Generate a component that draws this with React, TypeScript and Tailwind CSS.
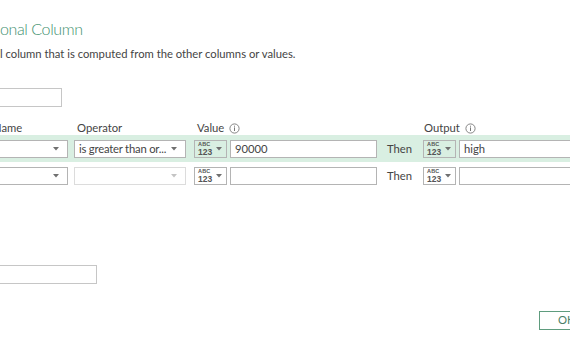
import type { ReactNode } from 'react'

function Caret({ light = false }: { light?: boolean }) {
  return (
    <svg width="6" height="4" viewBox="0 0 6 4" className="shrink-0">
      <path d="M0 0h6L3 3.5z" fill={light ? '#c4c4c4' : '#707070'} />
    </svg>
  )
}

function Info() {
  return (
    <svg width="11" height="11" viewBox="0 0 11 11" className="shrink-0">
      <circle cx="5.5" cy="5.5" r="4.6" fill="none" stroke="#777" strokeWidth="0.9" />
      <rect x="5" y="4.4" width="1" height="3.6" fill="#777" />
      <rect x="5" y="2.7" width="1" height="1" fill="#777" />
    </svg>
  )
}

function TypeBtn() {
  return (
    <div className="flex h-[18px] w-[33px] shrink-0 items-center gap-[4px] border border-[#b4b4b4] pl-[3px]">
      <div className="flex flex-col font-['Liberation_Sans',sans-serif] font-bold leading-none text-[#555]">
        <span className="text-[5.5px] tracking-[0.2px]">ABC</span>
        <span className="mt-[1px] text-[8.5px] leading-[7px]">123</span>
      </div>
      <Caret />
    </div>
  )
}

function Dropdown({ text, w, disabled, className = '' }: { text?: string; w: string; disabled?: boolean; className?: string }) {
  return (
    <div className={`flex h-[18px] shrink-0 items-center justify-between bg-white pl-[4px] pr-[8px] ${w} border ${disabled ? 'border-[#dcdcdc]' : 'border-[#b4b4b4]'} ${className}`}>
      <span className="whitespace-nowrap tracking-[-0.2px]">{text}</span>
      <Caret light={disabled} />
    </div>
  )
}

function TextBox({ value, w }: { value?: string; w: string }) {
  return <div className={`flex h-[18px] shrink-0 items-center border border-[#b4b4b4] bg-white pl-[4px] ${w}`}>{value}</div>
}

function Row({ op, value, out, active, disabledOp }: { op?: string; value?: string; out?: string; active?: boolean; disabledOp?: boolean }) {
  return (
    <div className={`flex h-[27px] items-start pt-[5px] ${active ? 'bg-[#d9efe2]' : ''}`}>
      <Dropdown w="w-[78px]" className="-ml-[10px]" />
      <Dropdown w="w-[112px]" text={op} disabled={disabledOp} className="ml-[6px]" />
      <div className="ml-[8px] shrink-0"><TypeBtn /></div>
      <div className="ml-[3px] shrink-0"><TextBox w="w-[147px]" value={value} /></div>
      <div className="ml-[10px] flex h-[18px] w-[36px] shrink-0 items-center">Then</div>
      <TypeBtn />
      <div className="ml-[3px] shrink-0"><TextBox w="w-[140px]" value={out} /></div>
    </div>
  )
}

function Label({ children, info, className = '' }: { children: ReactNode; info?: boolean; className?: string }) {
  return (
    <div className={`flex shrink-0 items-center gap-[5px] ${className}`}>
      <span>{children}</span>
      {info && <Info />}
    </div>
  )
}

export default function App() {
  return (
    <div className="h-[350px] w-[570px] overflow-hidden bg-white font-['Segoe_UI',Lato,sans-serif] text-[11.25px] text-[#444]">
      <div className="pt-[16px] text-[16px] font-light leading-[26px] tracking-[-0.4px] text-[#3f9170] whitespace-nowrap">onal Column</div>
      <div className="mt-[4px] leading-[16px] whitespace-nowrap">l column that is computed from the other columns or values.</div>

      <div className="mt-[26px] h-[19px] w-[62px] border border-l-0 border-[#c6c6c6]" />

      <div className="mt-[13px] flex h-[16px] items-center whitespace-nowrap">
        <Label className="-ml-[7px] w-[84px]">Name</Label>
        <Label className="w-[120px]">Operator</Label>
        <Label info className="w-[227px]">Value</Label>
        <Label info>Output</Label>
      </div>

      <div className="-mt-[1px]">
        <Row active op="is greater than or..." value="90000" out="high" />
        <Row disabledOp />
      </div>

      <div className="mt-[76px] h-[19px] w-[97px] border border-l-0 border-[#c6c6c6]" />

      <div className="mt-[27px] flex justify-end">
        <div className="flex h-[19px] w-[31px] items-center border border-r-0 border-[#5f9c7e] pl-[18px] text-[#4b7f68]">OK</div>
      </div>
    </div>
  )
}
